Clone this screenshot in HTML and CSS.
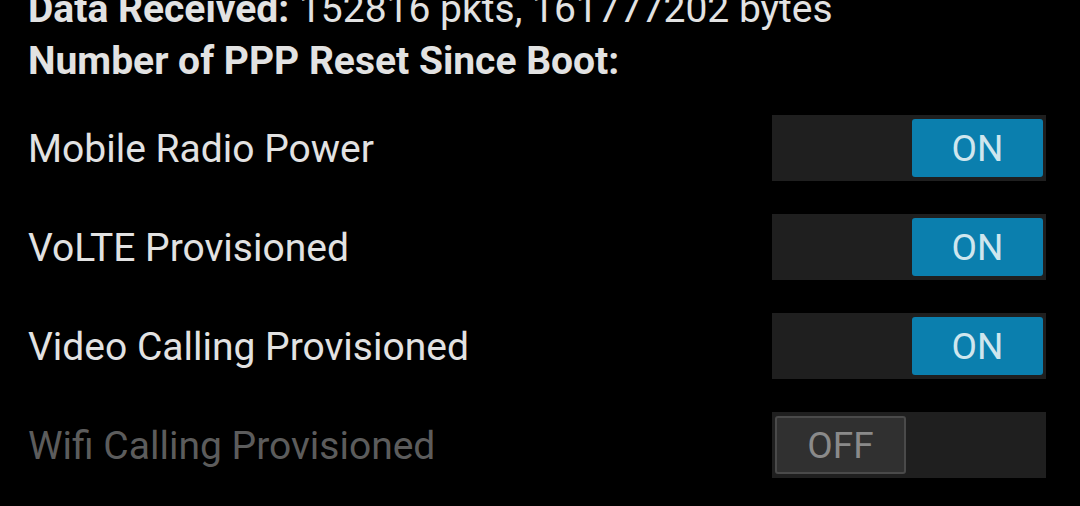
FILE: index.html
```html
<!DOCTYPE html>
<html>
<head>
<meta charset="utf-8">
<link rel="stylesheet" href="styles.css">
</head>
<body>
<div class="page">
  <div class="info">
    <div class="info-line"><span class="key">Data Received:</span> 152816 pkts, 161777202 bytes</div>
    <div class="info-line"><span class="key">Number of PPP Reset Since Boot:</span></div>
  </div>
  <div class="rows">
    <div class="row">
      <span class="label">Mobile Radio Power</span>
      <div class="switch on"><span class="thumb">ON</span></div>
    </div>
    <div class="row">
      <span class="label">VoLTE Provisioned</span>
      <div class="switch on"><span class="thumb">ON</span></div>
    </div>
    <div class="row">
      <span class="label">Video Calling Provisioned</span>
      <div class="switch on"><span class="thumb">ON</span></div>
    </div>
    <div class="row disabled">
      <span class="label">Wifi Calling Provisioned</span>
      <div class="switch off"><span class="thumb">OFF</span></div>
    </div>
  </div>
</div>
</body>
</html>
```

FILE: styles.css
```css
html, body {
  margin: 0;
  padding: 0;
  background: #000;
  overflow: hidden;
}
body {
  font-family: Roboto, "Noto Sans", sans-serif;
  color: #e2e2e2;
}
.page {
  width: 1080px;
  height: 506px;
  padding: 0 34px 0 28px;
  box-sizing: border-box;
}
.info {
  margin-top: -17px;
}
.info-line {
  font-size: 39px;
  line-height: 52px;
  white-space: nowrap;
}
.key {
  font-weight: 700;
}
.rows {
  margin-top: 11px;
}
.row {
  height: 99px;
  display: flex;
  align-items: center;
  justify-content: space-between;
}
.label {
  font-size: 39px;
  padding-top: 3px;
}
.row.disabled .label {
  color: #5c5c5c;
}
.switch {
  width: 274px;
  height: 66px;
  background: #1f1f1f;
  display: flex;
  align-items: center;
  padding: 0 3px;
  box-sizing: border-box;
}
.switch.on {
  justify-content: flex-end;
}
.switch.off {
  justify-content: flex-start;
}
.thumb {
  width: 131px;
  height: 58px;
  box-sizing: border-box;
  border-radius: 3px;
  display: flex;
  align-items: center;
  justify-content: center;
  font-size: 37px;
  padding-top: 2px;
}
.switch.on .thumb {
  background: #0b7fae;
  color: #cfe6ee;
}
.switch.off .thumb {
  background: #303030;
  border: 2px solid #4a4a4a;
  color: #8a8a8a;
}
```
